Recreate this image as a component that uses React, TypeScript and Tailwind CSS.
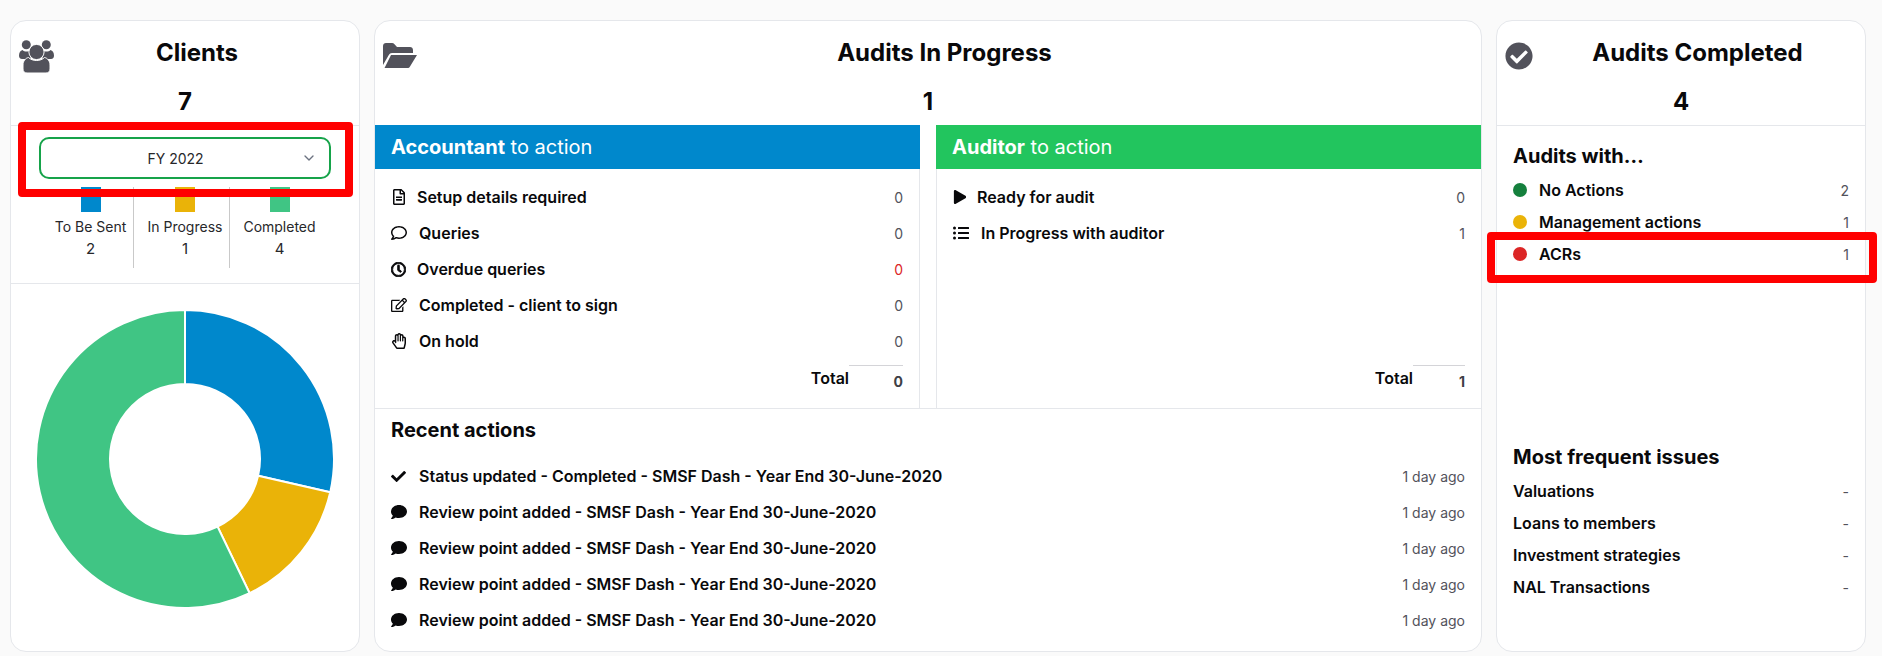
import React from 'react';
import {
  FaCheckCircle, FaRegFileAlt, FaRegComment, FaRegClock,
  FaRegEdit, FaRegHandPaper, FaPlay, FaListUl, FaCheck, FaComment,
} from 'react-icons/fa';
import { ChevronDown } from 'lucide-react';

const accountantRows = [
  { icon: <FaRegFileAlt className="text-[16px]" />, label: 'Setup details required', value: 0, gap: 'w-[26px]' },
  { icon: <FaRegComment className="text-[16px]" />, label: 'Queries', value: 0, gap: 'w-[28px]' },
  { icon: <FaRegClock className="text-[15px]" stroke="currentColor" strokeWidth={30} />, label: 'Overdue queries', value: 0, gap: 'w-[26px]', alert: true },
  { icon: <FaRegEdit className="text-[16px]" />, label: 'Completed - client to sign', value: 0, gap: 'w-[28px]' },
  { icon: <FaRegHandPaper className="text-[16px]" />, label: 'On hold', value: 0, gap: 'w-[28px]' },
];

const auditorRows = [
  { icon: <FaPlay className="text-[14px]" />, label: 'Ready for audit', value: 0, gap: 'w-[24px]' },
  { icon: <FaListUl className="text-[16px]" />, label: 'In Progress with auditor', value: 1, gap: 'w-[28px]' },
];

const recentActions = [
  { done: true, label: 'Status updated - Completed - SMSF Dash - Year End 30-June-2020' },
  { done: false, label: 'Review point added - SMSF Dash - Year End 30-June-2020' },
  { done: false, label: 'Review point added - SMSF Dash - Year End 30-June-2020' },
  { done: false, label: 'Review point added - SMSF Dash - Year End 30-June-2020' },
  { done: false, label: 'Review point added - SMSF Dash - Year End 30-June-2020' },
];

const completedRows = [
  { color: 'bg-[#15803d]', label: 'No Actions', value: 2 },
  { color: 'bg-[#eab308]', label: 'Management actions', value: 1 },
  { color: 'bg-[#dc2626]', label: 'ACRs', value: 1 },
];

const issues = ['Valuations', 'Loans to members', 'Investment strategies', 'NAL Transactions'];

const legend = [
  { color: 'bg-[#0088cc]', label: 'To Be Sent', value: 2, cls: 'w-[85px]' },
  { color: 'bg-[#eab308]', label: 'In Progress', value: 1, cls: 'w-[96px] pl-[7px] border-l border-[#c9c9c9]' },
  { color: 'bg-[#40c584]', label: 'Completed', value: 4, cls: 'w-[100px] border-l border-[#c9c9c9]' },
];

// Donut slices, clockwise from 12 o'clock
function slicePath(from: number, to: number, r1: number, r2: number, c: number) {
  const pt = (a: number, r: number) => {
    const rad = (a * Math.PI) / 180;
    return `${c + r * Math.sin(rad)} ${c - r * Math.cos(rad)}`;
  };
  const large = to - from > 180 ? 1 : 0;
  return `M${pt(from, r2)} A${r2} ${r2} 0 ${large} 1 ${pt(to, r2)} L${pt(to, r1)} A${r1} ${r1} 0 ${large} 0 ${pt(from, r1)} Z`;
}

function Donut() {
  const data = [
    { v: 2, color: '#0088cc' },
    { v: 1, color: '#eab308' },
    { v: 4, color: '#40c584' },
  ];
  let angle = 0;
  return (
    <svg width="300" height="300" viewBox="0 0 300 300">
      {data.map((d) => {
        const from = angle;
        angle += (d.v / 7) * 360;
        return <path key={d.color} d={slicePath(from, angle, 75, 149, 150)} fill={d.color} stroke="#fff" strokeWidth="2" />;
      })}
    </svg>
  );
}

// Three people, centre one in front with a white outline
function UsersIcon() {
  return (
    <svg className="mt-[3px] text-[#52525b]" width="35" height="33" viewBox="0 0 35 33" fill="currentColor">
      <circle cx="7.3" cy="4.7" r="4.5" />
      <circle cx="27.3" cy="4.7" r="4.5" />
      <path d="M0 15.5c0-3 1.5-5 3.5-5.5 1 1 2.5 1.5 4 1.5s3-.5 4-1.5V19H3c-2 0-3-1.5-3-3.5z" />
      <path d="M35 15.5c0-3-1.5-5-3.5-5.5-1 1-2.5 1.5-4 1.5s-3-.5-4-1.5V19h8.5c2 0 3-1.5 3-3.5z" />
      <circle cx="17.5" cy="12" r="7.6" stroke="#fff" strokeWidth="1" />
      <path d="M4 29v-4c0-4 2.5-7 5.5-7.5 2 2 5 3 8 3s6-1 8-3c3 .5 5.5 3.5 5.5 7.5v4c0 2.5-1.5 4-4 4H8c-2.5 0-4-1.5-4-4z" stroke="#fff" strokeWidth="1" />
    </svg>
  );
}

function FolderIcon() {
  return (
    <svg className="mt-[6px] text-[#52525b]" width="34" height="25" viewBox="0 0 34 25" fill="currentColor">
      <path d="M0 3c0-1.7 1.3-3 3-3h6c1 0 1.8.4 2.5 1.2L14 4h13c1.7 0 3 1.3 3 3v3H9c-1.5 0-2.5.7-3.2 2L0 22z" />
      <path d="M8 12h26l-7 11.5c-.6 1-1.4 1.5-2.5 1.5H1.5z" />
    </svg>
  );
}

function CardHeader({ icon, title, count, titleCls }: { icon: React.ReactNode; title: string; count: number; titleCls: string }) {
  return (
    <div className="h-[104px] shrink-0">
      <div className={`flex h-[65px] items-start pt-[16px] pl-2 ${titleCls}`}>
        {icon}
        <h2 className="flex-1 text-center text-[24px] leading-[32px] font-bold">{title}</h2>
      </div>
      <div className="text-center text-[24px] leading-[32px] font-bold">{count}</div>
    </div>
  );
}

function ActionColumn({ color, who, rows, total, body, totalCls }: {
  color: string; who: string; total: number; body: string; totalCls: string;
  rows: { icon: React.ReactNode; label: string; value: number; gap: string; alert?: boolean }[];
}) {
  return (
    <div className="flex flex-1 flex-col">
      <div className={`h-[44px] shrink-0 px-4 text-[20px] leading-[44px] text-white ${color}`}>
        <span className="font-bold">{who}</span> to action
      </div>
      <div className={`flex flex-1 flex-col border-[#e5e7eb] pt-[10px] pb-[16px] ${body}`}>
        {rows.map((r) => (
          <div key={r.label} className="flex h-[36px] items-center">
            <span className={`flex ${r.gap} shrink-0 items-center`}>{r.icon}</span>
            <span className="flex-1 text-[16px] font-semibold">{r.label}</span>
            <span className={`text-[14px] ${r.alert ? 'text-[#dc2626]' : 'text-[#52525b]'}`}>{r.value}</span>
          </div>
        ))}
        <div className="mt-auto flex justify-end">
          <span className="pt-[1px] text-[16px] font-semibold">Total</span>
          <span className={`${totalCls} border-t border-[#d4d4d8] pt-[6px] text-right text-[14px] leading-[20px] font-bold text-[#3f3f46]`}>{total}</span>
        </div>
      </div>
    </div>
  );
}

export default function App() {
  return (
    <div className="relative h-[656px] overflow-hidden bg-[#fafafa] pt-[20px] pr-[16px] pb-[4px] pl-[10px] text-[#09090b] [font-family:Inter,sans-serif]">
      <div className="flex h-full gap-[14px]">
        {/* Clients */}
        <div className="flex w-[350px] flex-col rounded-2xl border border-[#e5e7eb] bg-white">
          <CardHeader icon={<UsersIcon />} titleCls="pr-[19px]" title="Clients" count={7} />
          <div className="h-[159px] shrink-0 border-y border-[#e5e7eb]">
            <div className="px-[28px] pt-[11px]">
              <div className="relative flex h-[42px] items-center justify-center rounded-[10px] border-2 border-[#16a34a] pr-[19px] text-[14px] text-[#27272a]">
                FY 2022
                <ChevronDown className="absolute right-[12px] h-4 w-4 text-[#6b7280]" />
              </div>
            </div>
            <div className="mt-[8px] flex pl-[37px]">
              {legend.map((l) => (
                <div key={l.label} className={`flex h-[81px] flex-col items-center ${l.cls}`}>
                  <div className={`h-[25px] w-[20px] ${l.color}`} />
                  <div className="mt-[5px] text-[14px] leading-[20px] text-[#27272a]">{l.label}</div>
                  <div className="mt-[2px] text-[15px] leading-[20px] text-[#27272a]">{l.value}</div>
                </div>
              ))}
            </div>
          </div>
          <div className="flex flex-1 justify-center pt-[25px]">
            <Donut />
          </div>
        </div>

        {/* Audits in progress */}
        <div className="flex flex-1 flex-col overflow-hidden rounded-2xl border border-[#e5e7eb] bg-white">
          <CardHeader icon={<FolderIcon />} titleCls="pr-[9px]" title="Audits In Progress" count={1} />
          <div className="flex h-[284px] shrink-0 gap-4 border-b border-[#e5e7eb]">
            <ActionColumn color="bg-[#0088cc]" who="Accountant" rows={accountantRows} total={0} totalCls="w-[54px]" body="border-r pr-4 pl-4" />
            <ActionColumn color="bg-[#22c55e]" who="Auditor" rows={auditorRows} total={1} totalCls="w-[52px]" body="border-l pr-4 pl-4" />
          </div>
          <div className="px-4 pt-[7px]">
            <h3 className="text-[20px] leading-[28px] font-bold">Recent actions</h3>
            <div className="mt-[14px]">
              {recentActions.map((a, i) => (
                <div key={i} className="flex h-[36px] items-center">
                  <span className="flex w-[28px] shrink-0 items-center">
                    {a.done ? <FaCheck className="text-[15px]" /> : <FaComment className="text-[16px]" />}
                  </span>
                  <span className="flex-1 text-[16px] font-semibold">{a.label}</span>
                  <span className="text-[14px] text-[#52525b]">1 day ago</span>
                </div>
              ))}
            </div>
          </div>
        </div>

        {/* Audits completed */}
        <div className="flex w-[370px] flex-col rounded-2xl border border-[#e5e7eb] bg-white">
          <CardHeader icon={<FaCheckCircle className="mt-[5px] text-[28px] text-[#52525b]" />} titleCls="pr-[3px]" title="Audits Completed" count={4} />
          <div className="flex flex-1 flex-col border-t border-[#e5e7eb] px-4 pt-[16px] pb-[48px]">
            <h3 className="text-[20px] leading-[28px] font-bold">Audits with…</h3>
            <div className="mt-[4px]">
              {completedRows.map((r) => (
                <div key={r.label} className="flex h-[32px] items-center">
                  <span className={`h-[14px] w-[14px] rounded-full ${r.color}`} />
                  <span className="ml-[12px] flex-1 text-[16px] font-semibold">{r.label}</span>
                  <span className="text-[14px] text-[#52525b]">{r.value}</span>
                </div>
              ))}
            </div>
            <div className="mt-auto">
              <h3 className="text-[20px] leading-[28px] font-bold">Most frequent issues</h3>
              <div className="mt-[4px]">
                {issues.map((label) => (
                  <div key={label} className="flex h-[32px] items-center">
                    <span className="flex-1 text-[16px] font-semibold">{label}</span>
                    <span className="text-[14px] text-[#52525b]">-</span>
                  </div>
                ))}
              </div>
            </div>
          </div>
        </div>
      </div>

      {/* Red annotation boxes drawn over the screenshot */}
      <div className="absolute top-[122px] left-[18px] h-[75px] w-[335px] rounded-[4px] border-[8px] border-[#ff0000]" />
      <div className="absolute top-[232px] left-[1487px] h-[51px] w-[390px] rounded-[4px] border-[8px] border-[#ff0000]" />
    </div>
  );
}
